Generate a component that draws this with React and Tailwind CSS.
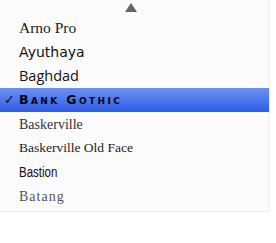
const fonts = [
  { name: 'Arno Pro', cls: "font-['Liberation_Serif',serif] text-[15.5px] text-[#1a1a1a]" },
  { name: 'Ayuthaya', cls: "font-['DejaVu_Sans',sans-serif] text-[14px] text-[#111]" },
  { name: 'Baghdad', cls: "font-['Open_Sans',sans-serif] text-[14.5px] text-[#111]" },
  { name: 'Bank Gothic', sel: true, cls: "font-['DejaVu_Sans',sans-serif] text-[12.5px] [font-variant:small-caps] tracking-[2.4px] font-semibold text-[#050510]" },
  { name: 'Baskerville', cls: "font-['Liberation_Serif',serif] text-[14px] text-[#333]" },
  { name: 'Baskerville Old Face', cls: "font-['Liberation_Serif',serif] text-[13.5px] text-[#222]" },
  { name: 'Bastion', cls: "font-['Liberation_Sans',sans-serif] text-[14px] text-[#111] inline-block scale-x-[0.82] origin-left" },
  { name: 'Batang', cls: "font-['Liberation_Serif',serif] text-[14px] text-[#555] tracking-[1px]" },
];

export default function App() {
  return (
    <div className="w-[276px] h-[243px] bg-white overflow-hidden">
      <div className="w-[270px] bg-[#fbfbfb] border-r border-b border-[#eeeeee] pb-[3px]">
        <div className="h-[16px] flex justify-center pt-[3px]">
          <svg width="12" height="9" viewBox="0 0 12 9" className="ml-[-8px]">
            <polygon points="6,0 12,9 0,9" fill="#666" />
          </svg>
        </div>
        {fonts.map((f) => (
          <div
            key={f.name}
            className={
              'h-[24px] flex items-center relative ' +
              (f.sel ? 'bg-gradient-to-b from-[#6f90f2] to-[#2c5be8]' : '')
            }
          >
            {f.sel && (
              <span className="absolute left-[4px] text-[13px] text-[#111] font-['DejaVu_Sans',sans-serif]">✓</span>
            )}
            <span className={'ml-[19px] whitespace-nowrap ' + f.cls}>{f.name}</span>
          </div>
        ))}
      </div>
    </div>
  );
}
